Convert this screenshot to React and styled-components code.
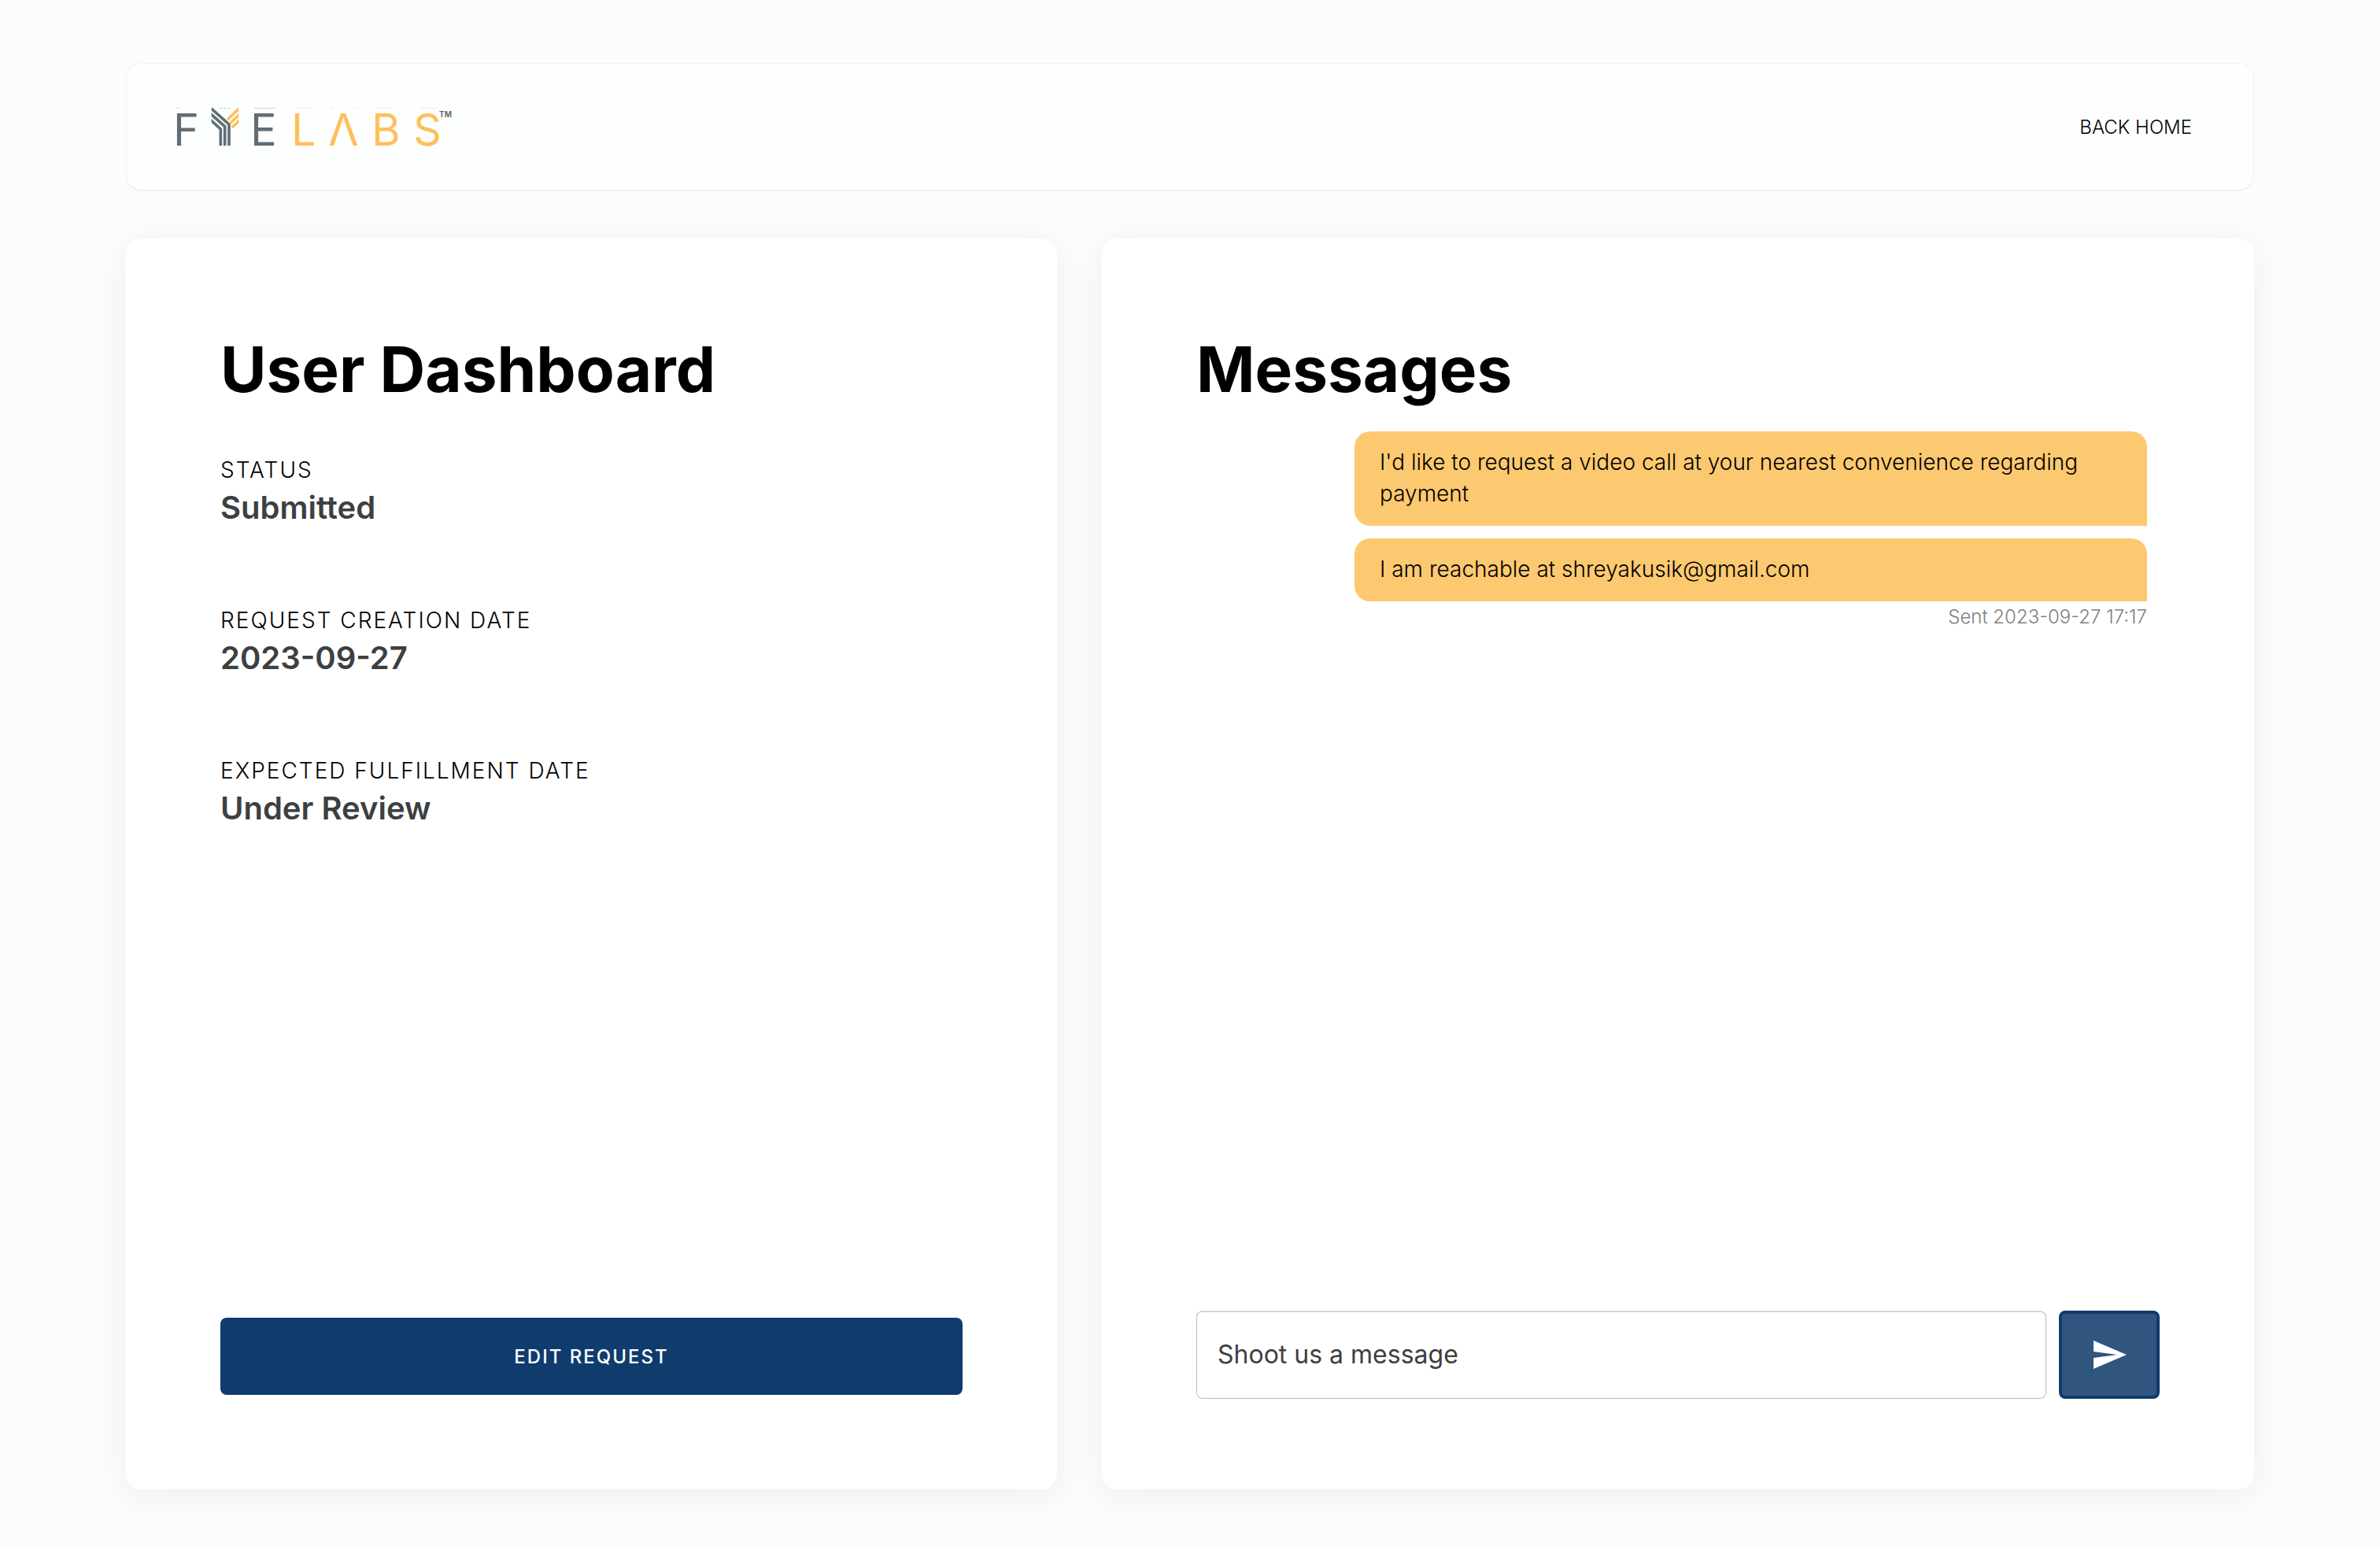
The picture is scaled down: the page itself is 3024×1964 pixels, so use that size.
import React from "react";
import styled, { createGlobalStyle } from "styled-components";

const GlobalStyle = createGlobalStyle`
  *, *::before, *::after { box-sizing: border-box; }
  body {
    margin: 0;
    background: #fbfcfe;
    color: #000;
    font-family: Inter, "Liberation Sans", sans-serif;
    font-optical-sizing: none;
  }
`;

const Page = styled.div`
  display: flex;
  flex-direction: column;
  gap: 60px;
  min-height: 100vh;
  padding: 80px 160px 72px;
`;

const Header = styled.header`
  display: flex;
  align-items: center;
  justify-content: space-between;
  height: 163px;
  padding: 0 78px 0 60px;
  background: #fdfffe;
  border: 1px solid #eff0f3;
  border-bottom-width: 2px;
  border-radius: 20px;
`;

const LogoSvg = styled.svg`
  display: block;
  width: 354px;
  height: 48px;
  overflow: visible;
`;

const LogoLetter = styled.text`
  font-family: Inter, sans-serif;
  font-size: 56px;
  font-weight: 400;
  fill: ${(p) => (p.$dark ? "#616e76" : "#ffbf5c")};
`;

const LogoMark = styled.text`
  font-family: Inter, sans-serif;
  font-size: 10px;
  font-weight: 700;
  fill: #616e76;
`;

const HomeLink = styled.a`
  padding-top: 2px;
  font-size: 24px;
  font-weight: 300;
  line-height: 32px;
  color: #000;
  text-decoration: none;
`;

const Columns = styled.main`
  display: grid;
  grid-template-columns: 1183fr 1464fr;
  gap: 57px;
  flex: 1;
`;

const Card = styled.section`
  display: flex;
  flex-direction: column;
  justify-content: space-between;
  min-width: 0;
  padding: 118px 120px ${(p) => p.$bottom}px;
  background: #fff;
  border-radius: 20px;
  box-shadow: 0 8px 48px rgba(0, 0, 0, 0.06);
`;

const Title = styled.h1`
  margin: 0;
  font-size: 80px;
  font-weight: 700;
  line-height: 96px;
`;

const Details = styled.dl`
  display: flex;
  flex-direction: column;
  gap: 95px;
  margin: 60px 0 0;
`;

const Term = styled.dt`
  font-size: 28px;
  font-weight: 300;
  line-height: 40px;
  letter-spacing: 2px;
  text-transform: uppercase;
`;

const Value = styled.dd`
  margin: 0;
  font-size: 40px;
  font-weight: 600;
  line-height: 56px;
  color: #3c4041;
`;

const EditButton = styled.button`
  width: 100%;
  height: 98px;
  padding: 2px 0 0;
  border: 0;
  border-radius: 8px;
  background: #0f3b6d;
  color: #fff;
  font: 500 24px/32px Inter, sans-serif;
  letter-spacing: 2px;
`;

const Thread = styled.div`
  display: flex;
  flex-direction: column;
  align-items: flex-end;
  gap: 16px;
  margin-top: 31px;
  padding-right: 16px;
`;

const Bubble = styled.p`
  width: 1007px;
  max-width: 100%;
  margin: 0;
  padding: 19px 32px 21px;
  border-radius: 20px 20px 0 20px;
  background: #fdc970;
  font-size: 28px;
  font-weight: 300;
  line-height: 40px;
`;

const Sent = styled.time`
  margin-top: -12px;
  font-size: 24px;
  font-weight: 300;
  line-height: 32px;
  color: #808080;
`;

const Composer = styled.form`
  display: flex;
  gap: 16px;
`;

const MessageInput = styled.input`
  flex: 1;
  min-width: 0;
  height: 112px;
  padding: 0 26px 2px;
  border: 1px solid #bcbcbc;
  border-top: 2px solid #d6d6d6;
  border-radius: 8px;
  background: #fff;
  font: 400 32px/40px Inter, sans-serif;
  color: #3c4041;
  &::placeholder { color: #3c4041; opacity: 1; }
`;

const SendButton = styled.button`
  display: flex;
  align-items: center;
  justify-content: center;
  width: 128px;
  height: 112px;
  padding: 0;
  border: 4px solid #0f3b6d;
  border-radius: 8px;
  background: #30557f;
  color: #fff;
`;

function Logo() {
  return (
    <LogoSvg viewBox="0 0 354 48" role="img" aria-label="FYELABS">
      <g opacity="0.3" strokeWidth="1" fill="none">
        <path stroke="#616e76" d="M3 .5h4M58 .5h4M63 .5h4M68 .5h4M102 .5h27" />
        <path stroke="#ffbf5c" d="M153 .5h25M198 .5h5M227 .5h5M256 .5h20M313 .5h18" />
      </g>
      <LogoLetter $dark x="-1" y="48">F</LogoLetter>
      <g transform="translate(-12 -17) scale(0.333333)">
        <g clipPath="url(#mark)" fill="none" strokeWidth="11">
          <path stroke="#616e76" d="M170 46L246 114V200M170 69L230 122V200M170 92L214 132V200" />
          <path stroke="#ffbf5c" d="M293 46L240 96M293 69L249 111M293 92L257 126" />
        </g>
        <clipPath id="mark"><rect x="179" y="51" width="104" height="144" /></clipPath>
      </g>
      <LogoLetter $dark x="97" y="48">E</LogoLetter>
      <LogoLetter x="149" y="48">L</LogoLetter>
      <LogoLetter x="196" y="48">Λ</LogoLetter>
      <LogoLetter x="251" y="48">B</LogoLetter>
      <LogoLetter x="304" y="48">S</LogoLetter>
      <LogoMark x="337" y="12">TM</LogoMark>
    </LogoSvg>
  );
}

const details = [
  ["Status", "Submitted"],
  ["Request creation date", "2023-09-27"],
  ["Expected fulfillment date", "Under Review"],
];

const messages = [
  "I'd like to request a video call at your nearest convenience regarding payment",
  "I am reachable at shreyakusik@gmail.com",
];

export default function App() {
  return (
    <>
      <GlobalStyle />
      <Page>
        <Header>
          <Logo />
          <HomeLink href="#home">BACK HOME</HomeLink>
        </Header>
        <Columns>
          <Card $bottom={120}>
            <div>
              <Title>User Dashboard</Title>
              <Details>
                {details.map(([term, value]) => (
                  <div key={term}>
                    <Term>{term}</Term>
                    <Value>{value}</Value>
                  </div>
                ))}
              </Details>
            </div>
            <EditButton type="button">EDIT REQUEST</EditButton>
          </Card>
          <Card $bottom={115}>
            <div>
              <Title as="h2">Messages</Title>
              <Thread>
                {messages.map((text) => (
                  <Bubble key={text}>{text}</Bubble>
                ))}
                <Sent dateTime="2023-09-27T17:17">Sent 2023-09-27 17:17</Sent>
              </Thread>
            </div>
            <Composer onSubmit={(e) => e.preventDefault()}>
              <MessageInput aria-label="Message" placeholder="Shoot us a message" />
              <SendButton type="submit" aria-label="Send message">
                <svg width="48" height="48" viewBox="0 0 24 24" fill="currentColor">
                  <path d="M2 21L23 12L2 3V10L17 12L2 14V21Z" />
                </svg>
              </SendButton>
            </Composer>
          </Card>
        </Columns>
      </Page>
    </>
  );
}
